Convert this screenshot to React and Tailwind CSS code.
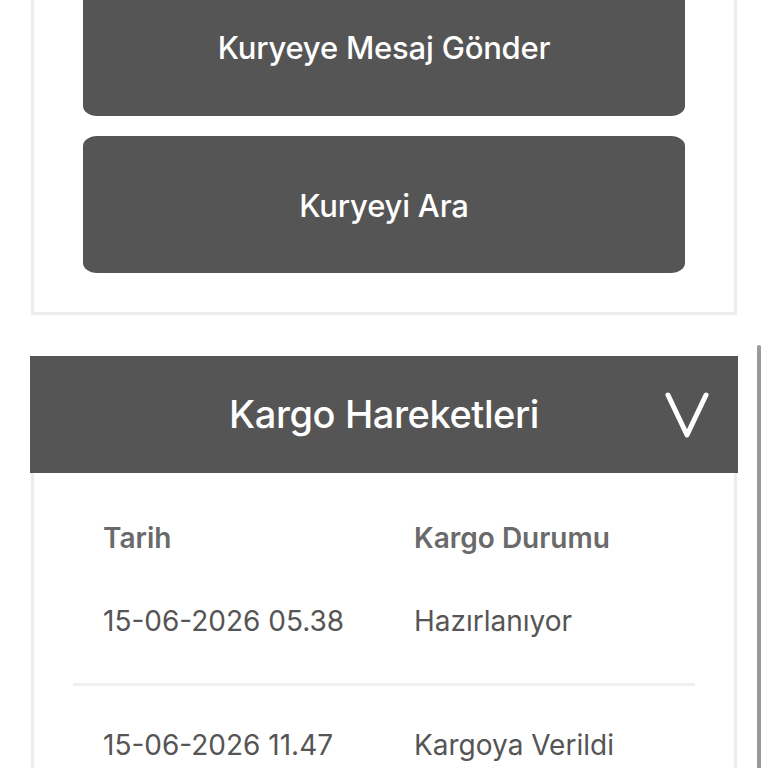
import React from "react";

function Chevron() {
  return (
    <svg width="48" height="52" viewBox="0 0 48 52" fill="none">
      <path d="M5 6 L24 46 L43 6" stroke="#ffffff" strokeWidth="5" strokeLinecap="round" strokeLinejoin="round" />
    </svg>
  );
}

export default function App() {
  const font = { fontFamily: "Inter, 'Noto Sans', 'Liberation Sans', sans-serif" };
  return (
    <div className="relative w-[768px] h-[768px] overflow-hidden bg-white" style={font}>
      <div className="px-[30px] flex flex-col">
        {/* top card */}
        <div className="mt-[-62px] mx-[1px] border-[3px] border-[#ececec] bg-white px-[49px] pt-[39px] pb-[39px] flex flex-col gap-[20px]">
          <div className="h-[136px] bg-[#555555] rounded-[14px/10px] flex items-center justify-center text-white text-[31px] font-medium tracking-[-0.2px]">
            Kuryeye Mesaj Gönder
          </div>
          <div className="h-[137px] pt-[3px] bg-[#555555] rounded-[14px/10px] flex items-center justify-center text-white text-[31px] font-medium tracking-[-0.2px]">
            Kuryeyi Ara
          </div>
        </div>

        {/* Kargo Hareketleri */}
        <div className="mt-[41px] flex flex-col">
          <div className="relative h-[117px] bg-[#555555] flex items-center justify-center">
            <span className="text-white text-[38px] font-medium tracking-[-0.4px]">Kargo Hareketleri</span>
            <div className="absolute right-[27px] top-[33px]">
              <Chevron />
            </div>
          </div>
          <div className="mx-[1px] border-x-[3px] border-[#ececec] bg-white px-[39px] pt-[49px] h-[400px]">
            <div className="px-[30px] grid grid-cols-[311px_1fr] text-[28px] leading-[32px] font-semibold text-[#6a6a6a]">
              <div>Tarih</div>
              <div>Kargo Durumu</div>
            </div>
            <div className="mt-[51px] px-[30px] grid grid-cols-[311px_1fr] text-[28px] leading-[32px] text-[#555555]">
              <div>15-06-2026 05.38</div>
              <div>Hazırlanıyor</div>
            </div>
            <div className="mt-[46px] h-[3px] bg-[#f0f0f0]" />
            <div className="mt-[43px] px-[30px] grid grid-cols-[311px_1fr] text-[28px] leading-[32px] text-[#555555]">
              <div>15-06-2026 11.47</div>
              <div>Kargoya Verildi</div>
            </div>
          </div>
        </div>
      </div>
      {/* scrollbar */}
      <div className="absolute left-[757px] top-[345px] w-[4px] h-[440px] rounded-full bg-[#9a9a9a]" />
    </div>
  );
}
